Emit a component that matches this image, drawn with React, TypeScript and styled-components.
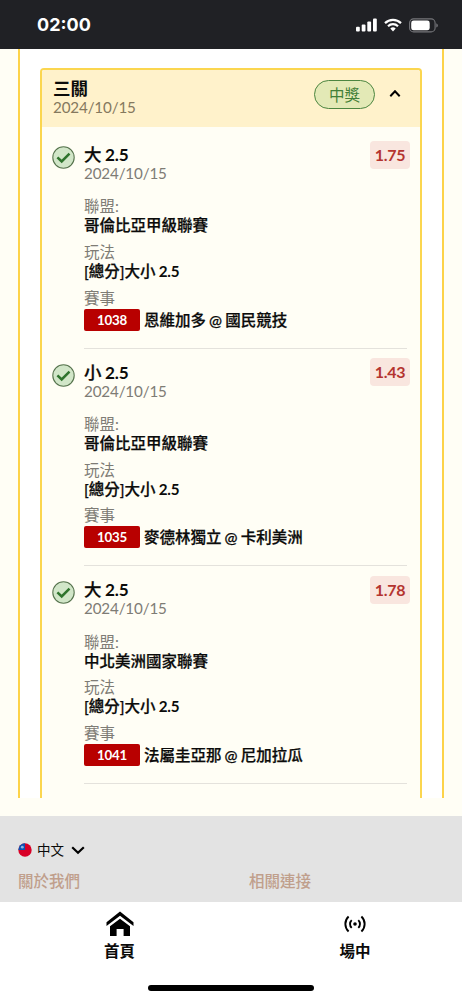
import React from "react";
import styled, { createGlobalStyle } from "styled-components";

const GlobalStyle = createGlobalStyle`
  * { box-sizing: border-box; }
  body {
    margin: 0;
    background: #fffef5;
    color: #0b0b0a;
    font-family: Lato, "Noto Sans CJK TC", sans-serif;
    font-size: 15.5px;
    line-height: 19px;
  }
`;

const Screen = styled.div`
  width: 462px;
  height: 1000px;
  display: flex;
  flex-direction: column;
  overflow: hidden;
`;

const StatusBar = styled.header`
  flex: none;
  height: 49px;
  padding: 1px 24px 0 37px;
  display: flex;
  align-items: center;
  justify-content: space-between;
  background: #202125;
  color: #fff;
`;

const Clock = styled.span`
  font: 700 18px/22px Inter, sans-serif;
`;

const StatusIcons = styled.div`
  display: flex;
  align-items: center;
  gap: 7px;
  svg { display: block; }
`;

const Main = styled.main`
  flex: none;
  height: 767px;
  padding: 0 18px 18px;
`;

const Frame = styled.section`
  height: 749px;
  padding: 19px 20px 0;
  border: solid #fdd349;
  border-width: 0 2px;
  background: #fff;
`;

const Ticket = styled.article`
  height: 730px;
  border: 2px solid #fbd64f;
  border-bottom: 0;
  border-radius: 4px 4px 0 0;
  background: #fffef5;
  overflow: hidden;
`;

const TicketHeader = styled.div`
  height: 57px;
  padding: 9px 19px 0 11px;
  display: flex;
  justify-content: space-between;
  background: #fff2cb;
`;

const Title = styled.h2`
  margin: 0;
  font-size: 17.5px;
  font-weight: ${(p: { $heavy?: boolean }) => (p.$heavy ? 700 : 500)};
  -webkit-text-stroke: ${(p: { $heavy?: boolean }) => (p.$heavy ? "0" : "0.25px")};
  line-height: 19px;
  white-space: nowrap;
`;

const DateText = styled.div`
  color: ${(p: { $onGold?: boolean }) => (p.$onGold ? "#85795e" : "#7e7c75")};
  font-size: 15.2px;
  letter-spacing: -0.15px;
`;

const Strong = styled.span`
  font-weight: 700;
  font-size: 0.98em;
  letter-spacing: -0.2px;
  word-spacing: -0.4px;
  -webkit-text-stroke: 0;
`;

const HeaderActions = styled.div`
  display: flex;
  align-items: flex-start;
  gap: 14px;
  svg { margin-top: 10px; }
`;

const WinPill = styled.span`
  width: 61px;
  height: 29px;
  margin-top: 1px;
  border: 1px solid #4c8540;
  border-radius: 15px;
  background: #e3e9b6;
  color: #438038;
  line-height: 29px;
  text-align: center;
`;

const Legs = styled.div`
  padding: 4px 13px 0 10px;
`;

const Leg = styled.div`
  height: 217.6px;
  padding-top: 14px;
  display: flex;
  gap: 9px;
`;

const CheckMark = styled.svg`
  flex: none;
  margin-top: 1px;
`;

const LegBody = styled.div`
  flex: 1;
  height: 203.6px;
  border-bottom: 1px solid #e4e2dc;
`;

const LegTop = styled.div`
  display: flex;
  justify-content: space-between;
  height: 38px;
  margin-bottom: 14.4px;
`;

const Odds = styled.span`
  width: 40px;
  height: 28px;
  margin: -4.5px -3px 0 0;
  border-radius: 4px;
  background: #f9e6df;
  color: #b4342f;
  font-size: 16px;
  font-weight: 700;
  letter-spacing: -0.3px;
  line-height: 28px;
  text-align: center;
`;

const Field = styled.div`
  margin-bottom: 7.7px;
`;

const Label = styled.div`
  color: #7e7c75;
  height: 19px;
`;

const Value = styled.div`
  height: 19px;
  font-weight: 500;
  -webkit-text-stroke: 0.25px;
  white-space: nowrap;
`;

const Match = styled(Value)`
  height: 23px;
  padding-top: 1px;
  display: flex;
  align-items: center;
  gap: 4px;
  line-height: 22px;
  word-spacing: -0.8px;
`;

const MatchNumber = styled.span`
  width: 56px;
  height: 22px;
  border-radius: 2px;
  background: #b80000;
  color: #fff;
  font-size: 13.3px;
  font-weight: 700;
  letter-spacing: -0.2px;
  line-height: 22px;
  text-align: center;
  -webkit-text-stroke: 0;
`;

const Footer = styled.footer`
  flex: none;
  height: 86px;
  padding: 24px 18px 0;
  background: #e3e3e3;
`;

const Language = styled.div`
  display: flex;
  align-items: center;
  height: 20px;
  font-size: 13.5px;
  svg { display: block; }
  span { margin: 0 7px 0 5px; }
`;

const FooterLinks = styled.div`
  display: grid;
  grid-template-columns: 231px 1fr;
  margin-top: 12px;
  color: #c09f8c;
  font-weight: 500;
`;

const TabBar = styled.nav`
  position: relative;
  flex: none;
  height: 98px;
  padding: 9px 0 0 4px;
  display: grid;
  grid-template-columns: 231px 240px;
  background: #fff;
`;

const Tab = styled.div`
  display: flex;
  flex-direction: column;
  align-items: center;
  gap: 2px;
  font-weight: 700;
  line-height: 22px;
  svg { display: block; height: 27px; }
`;

const HomeIndicator = styled.div`
  position: absolute;
  left: 148px;
  bottom: 9px;
  width: 166px;
  height: 6px;
  border-radius: 3px;
  background: #000;
`;

const legs = [
  { side: "大", odds: "1.75", league: "哥倫比亞甲級聯賽", id: "1038", match: "恩維加多 @ 國民競技" },
  { side: "小", odds: "1.43", league: "哥倫比亞甲級聯賽", id: "1035", match: "麥德林獨立 @ 卡利美洲" },
  { side: "大", odds: "1.78", league: "中北美洲國家聯賽", id: "1041", match: "法屬圭亞那 @ 尼加拉瓜" },
];

function Check() {
  return (
    <CheckMark width="23" height="23" viewBox="0 0 23 23" fill="none">
      <circle cx="11.5" cy="11.5" r="10.7" fill="#d1e6c8" stroke="#58754f" strokeWidth="1.1" />
      <path d="M5.4 11.3l4.3 4.2 7.8-7.9" stroke="#2f742d" strokeWidth="2.5" />
    </CheckMark>
  );
}

export default function App() {
  return (
    <Screen>
      <GlobalStyle />
      <StatusBar>
        <Clock>02:00</Clock>
        <StatusIcons>
          <svg width="21" height="14" viewBox="0 0 21 14" fill="#fff">
            <rect x="0" y="8.8" width="3.8" height="4.7" rx="1" />
            <rect x="5.7" y="6.5" width="3.8" height="7" rx="1" />
            <rect x="11.3" y="3.5" width="3.8" height="10" rx="1" />
            <rect x="17" y="0.5" width="3.8" height="13" rx="1" />
          </svg>
          <svg width="18" height="14" viewBox="0 0 18 14" fill="none" stroke="#fff" strokeWidth="2.2">
            <path d="M1 5.1a11.5 11.5 0 0 1 16 0" />
            <path d="M4 8.2a7.2 7.2 0 0 1 10 0" />
            <path d="M6.3 10.5a3.9 3.9 0 0 1 5.4 0L9 13.4z" fill="#fff" stroke="none" />
          </svg>
          <svg width="29" height="15" viewBox="0 0 29 15">
            <rect x="0.6" y="0.9" width="25.5" height="13" rx="4" fill="none" stroke="#75767a" strokeWidth="1.1" />
            <rect x="2.2" y="2.5" width="18.5" height="9.8" rx="2.4" fill="#fff" />
            <path d="M27.3 5.2v4.4q1.6-.8 1.6-2.2t-1.6-2.2z" fill="#75767a" />
          </svg>
        </StatusIcons>
      </StatusBar>

      <Main>
        <Frame>
          <Ticket>
            <TicketHeader>
              <div>
                <Title $heavy>三關</Title>
                <DateText $onGold>2024/10/15</DateText>
              </div>
              <HeaderActions>
                <WinPill>中獎</WinPill>
                <svg width="12" height="9" viewBox="0 0 12 9" fill="none" stroke="#000" strokeWidth="2">
                  <path d="M1.3 7.2L6 2.3l4.7 4.9" />
                </svg>
              </HeaderActions>
            </TicketHeader>
            <Legs>
              {legs.map((leg) => (
                <Leg key={leg.id}>
                  <Check />
                  <LegBody>
                    <LegTop>
                      <div>
                        <Title>{leg.side}<Strong> 2.5</Strong></Title>
                        <DateText>2024/10/15</DateText>
                      </div>
                      <Odds>{leg.odds}</Odds>
                    </LegTop>
                    <Field>
                      <Label>聯盟:</Label>
                      <Value>{leg.league}</Value>
                    </Field>
                    <Field>
                      <Label>玩法</Label>
                      <Value>[總分]大小<Strong> 2.5</Strong></Value>
                    </Field>
                    <Label>賽事</Label>
                    <Match>
                      <MatchNumber>{leg.id}</MatchNumber>
                      {leg.match}
                    </Match>
                  </LegBody>
                </Leg>
              ))}
            </Legs>
          </Ticket>
        </Frame>
      </Main>

      <Footer>
        <Language>
          <svg width="14" height="14" viewBox="0 0 14 14">
            <circle cx="7" cy="7" r="6.7" fill="#d80027" />
            <path d="M7 7H.3A6.7 6.7 0 0 1 7 .3z" fill="#0d52b4" />
            <circle cx="4.3" cy="4.2" r="1.4" fill="#8fb4df" />
          </svg>
          <span>中文</span>
          <svg width="14" height="10" viewBox="0 0 14 10" fill="none" stroke="#000" strokeWidth="2.2">
            <path d="M1.2 2.3L7 7.8l5.8-5.5" />
          </svg>
        </Language>
        <FooterLinks>
          <span>關於我們</span>
          <span>相關連接</span>
        </FooterLinks>
      </Footer>

      <TabBar>
        <Tab>
          <svg width="28" height="27" viewBox="0 0 28 27">
            <path d="M14 .6L.5 11.2v3.7L14 4.7l13.5 10.2v-3.7z" />
            <path d="M4 15.2L14 7.7l10 7.5V25h-6.4v-7h-7v7H4z" />
          </svg>
          首頁
        </Tab>
        <Tab>
          <svg width="22" height="27" viewBox="0 0 22 27" fill="none" stroke="#000" strokeWidth="1.9">
            <circle cx="11" cy="13" r="1.8" fill="#000" stroke="none" />
            <path d="M7.7 9.1a5.4 5.4 0 0 0 0 7.8M14.3 9.1a5.4 5.4 0 0 1 0 7.8M4.6 5.5a10.3 10.3 0 0 0 0 15M17.4 5.5a10.3 10.3 0 0 1 0 15" />
          </svg>
          場中
        </Tab>
        <HomeIndicator />
      </TabBar>
    </Screen>
  );
}
